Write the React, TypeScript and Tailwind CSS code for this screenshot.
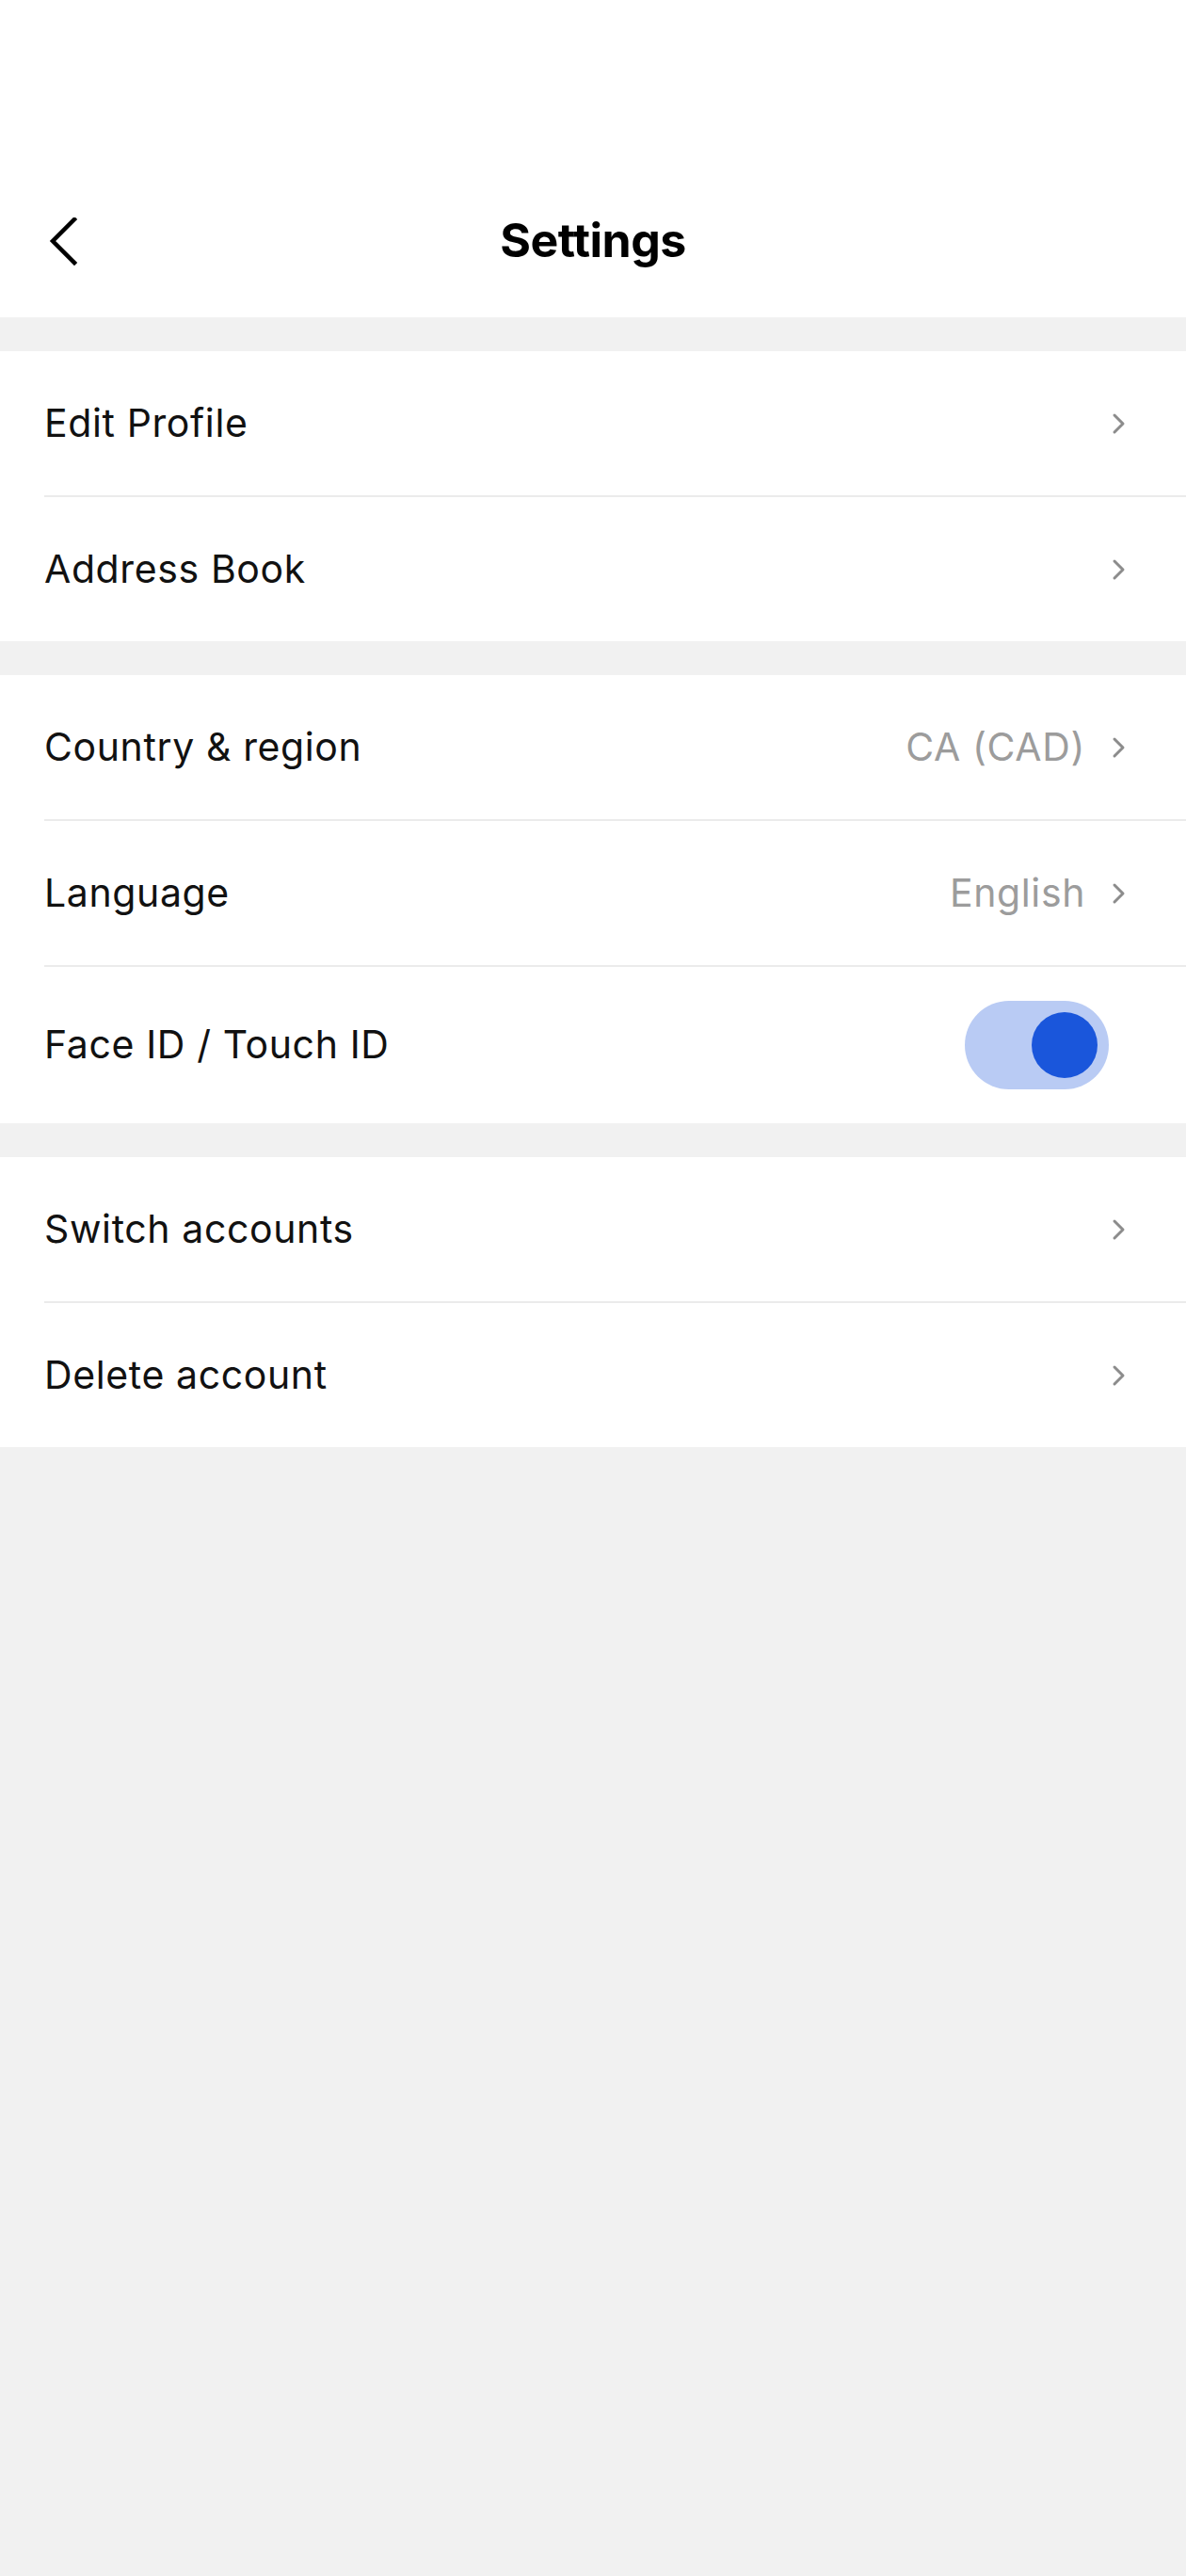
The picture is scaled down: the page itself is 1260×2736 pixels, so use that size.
import { useState } from "react";

type Row = {
  label: string;
  value?: string;
  toggle?: boolean;
};

const sections: Row[][] = [
  [{ label: "Edit Profile" }, { label: "Address Book" }],
  [
    { label: "Country & region", value: "CA (CAD)" },
    { label: "Language", value: "English" },
    { label: "Face ID / Touch ID", toggle: true },
  ],
  [{ label: "Switch accounts" }, { label: "Delete account" }],
];

function Chevron() {
  return (
    <svg width="16" height="24" viewBox="0 0 16 24" fill="none" className="shrink-0">
      <path d="M3 3 L12 12 L3 21" stroke="#8c8c8c" strokeWidth="3" strokeLinecap="round" strokeLinejoin="round" />
    </svg>
  );
}

function Toggle() {
  const [on, setOn] = useState(true);
  return (
    <button
      onClick={() => setOn((prev) => !prev)}
      className={`w-[153px] h-[94px] rounded-full flex items-center px-[12px] ${
        on ? "bg-[#b9cbf4] justify-end" : "bg-[#e5e5e5] justify-start"
      }`}
    >
      <span className={`w-[70px] h-[70px] rounded-full ${on ? "bg-[#1a56db]" : "bg-white"}`} />
    </button>
  );
}

export default function App() {
  return (
    <div className="min-h-[2736px] bg-[#f1f1f1] font-['Inter',sans-serif] text-[#111]">
      <div className="h-[337px] bg-white flex flex-col justify-end">
        <div className="h-[162px] relative flex items-center justify-center">
          <button className="absolute left-[50px] top-[56px]">
            <svg width="34" height="52" viewBox="0 0 34 52" fill="none">
              <path d="M29 2 L6 25 L29 48" stroke="#000" strokeWidth="4.5" strokeLinecap="square" />
            </svg>
          </button>
          <h1 className="text-[50px] font-bold tracking-[-0.01em] text-black -mt-[2px]">Settings</h1>
        </div>
      </div>

      <div className="flex flex-col gap-[36px] pt-[36px]">
        {sections.map((rows, i) => (
          <div key={i} className="bg-white">
            {rows.map((row, j) => (
              <div key={row.label}>
                {j > 0 && <div className="ml-[47px] h-[2px] bg-[#ebebeb]" />}
                <div
                  className={`flex items-center pl-[47px] pr-[63px] ${
                    row.toggle ? "h-[166px] pr-[82px]" : "h-[153px]"
                  }`}
                >
                  <span className="text-[41px] tracking-[0.015em] flex-1">{row.label}</span>
                  {row.value && (
                    <span className="text-[41px] tracking-[0.015em] text-[#9c9c9c] mr-[28px]">{row.value}</span>
                  )}
                  {row.toggle ? <Toggle /> : <Chevron />}
                </div>
              </div>
            ))}
          </div>
        ))}
      </div>
    </div>
  );
}
